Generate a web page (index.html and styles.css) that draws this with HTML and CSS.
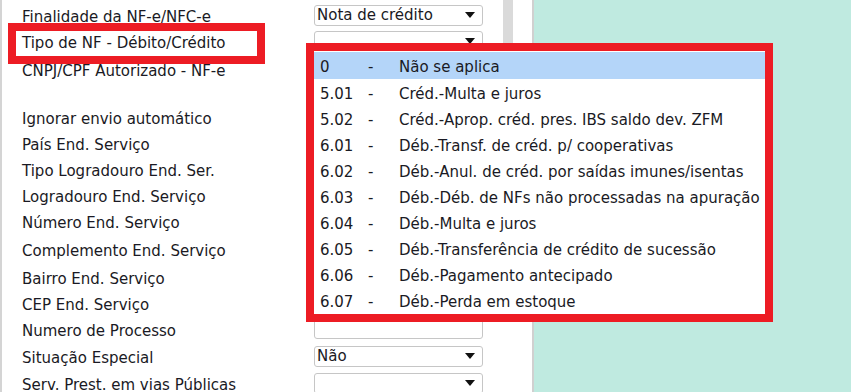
FILE: index.html
```html
<!DOCTYPE html>
<html lang="pt-BR">

<head>
    <meta charset="UTF-8">
    <meta name="viewport" content="width=device-width, initial-scale=1.0">
    <title>NF-e - Tipo de NF</title>
    <link rel="stylesheet" href="styles.css">
</head>

<body>

    <div class="screen">
        <div class="form-panel">
            <div class="form-rows">
                <div class="row">
                    <span class="label">Finalidade da NF-e/NFC-e</span>
                    <div class="field select"><span>Nota de crédito</span><i class="arrow"></i></div>
                </div>
                <div class="row">
                    <span class="label">Tipo de NF - Débito/Crédito</span>
                    <div class="field select"><span></span><i class="arrow"></i></div>
                </div>
                <div class="row row-top h50">
                    <span class="label">CNPJ/CPF Autorizado - NF-e</span>
                    <div class="field"></div>
                </div>
                <div class="row">
                    <span class="label">Ignorar envio automático</span>
                    <div class="check"></div>
                </div>
                <div class="row">
                    <span class="label">País End. Serviço</span>
                    <div class="field select"><span></span><i class="arrow"></i></div>
                </div>
                <div class="row">
                    <span class="label">Tipo Logradouro End. Ser.</span>
                    <div class="field select"><span></span><i class="arrow"></i></div>
                </div>
                <div class="row">
                    <span class="label">Logradouro End. Serviço</span>
                    <div class="field"></div>
                </div>
                <div class="row">
                    <span class="label">Número End. Serviço</span>
                    <div class="field"></div>
                </div>
                <div class="row h30">
                    <span class="label">Complemento End. Serviço</span>
                    <div class="field"></div>
                </div>
                <div class="row">
                    <span class="label">Bairro End. Serviço</span>
                    <div class="field"></div>
                </div>
                <div class="row h25">
                    <span class="label">CEP End. Serviço</span>
                    <div class="field"></div>
                </div>
                <div class="row h27">
                    <span class="label">Numero de Processo</span>
                    <div class="field"></div>
                </div>
                <div class="row h28">
                    <span class="label">Situação Especial</span>
                    <div class="field select"><span>Não</span><i class="arrow"></i></div>
                </div>
                <div class="row">
                    <span class="label">Serv. Prest. em vias Públicas</span>
                    <div class="field select"><span></span><i class="arrow"></i></div>
                </div>
            </div>
            <div class="scrollbar">
                <div class="scroll-thumb"></div>
            </div>
        </div>
        <div class="side-panel"></div>

        <!-- marcações em vermelho -->
        <div class="mark mark-label"></div>

        <div class="dropdown-list">
            <div class="option selected"><span>0</span><span>-</span><span>Não se aplica</span></div>
            <div class="option"><span>5.01</span><span>-</span><span>Créd.-Multa e juros</span></div>
            <div class="option"><span>5.02</span><span>-</span><span>Créd.-Aprop. créd. pres. IBS saldo dev. ZFM</span></div>
            <div class="option"><span>6.01</span><span>-</span><span>Déb.-Transf. de créd. p/ cooperativas</span></div>
            <div class="option"><span>6.02</span><span>-</span><span>Déb.-Anul. de créd. por saídas imunes/isentas</span></div>
            <div class="option"><span>6.03</span><span>-</span><span>Déb.-Déb. de NFs não processadas na apuração</span></div>
            <div class="option"><span>6.04</span><span>-</span><span>Déb.-Multa e juros</span></div>
            <div class="option"><span>6.05</span><span>-</span><span>Déb.-Transferência de crédito de sucessão</span></div>
            <div class="option"><span>6.06</span><span>-</span><span>Déb.-Pagamento antecipado</span></div>
            <div class="option"><span>6.07</span><span>-</span><span>Déb.-Perda em estoque</span></div>
        </div>
    </div>

</body>

</html>
```

FILE: styles.css
```css
body {
    margin: 0;
    padding: 0;
    font-family: "DejaVu Sans", Verdana, sans-serif;
    font-size: 15px;
    color: #1a1a24;
    overflow: hidden;
}

.screen {
    position: relative;
    display: flex;
    width: 851px;
    height: 392px;
    overflow: hidden;
}

.form-panel {
    display: flex;
    width: 534px;
    box-sizing: border-box;
    background: #fff;
    border-left: 2px solid #d4d4d4;
    border-right: 2px solid #d0d0d0;
}

.form-rows {
    padding: 2px 0 0 20px;
}

.row {
    display: flex;
    align-items: center;
    height: 26px;
}

.row-top {
    align-items: flex-start;
}

.row-top .label {
    line-height: 26px;
}

.row-top .field {
    margin-top: 2px;
}

.h25 { height: 25px; }
.h27 { height: 27px; }
.h28 { height: 28px; }
.h30 { height: 30px; }
.h50 { height: 50px; }

.label {
    width: 292px;
    padding-top: 4px;
    white-space: nowrap;
}

.field {
    display: flex;
    align-items: center;
    width: 169px;
    height: 21px;
    box-sizing: border-box;
    padding: 0 7px 0 2px;
    border: 1px solid #c6c6c6;
    border-radius: 3px;
    background: #fff;
    white-space: nowrap;
}

.field span {
    flex: 1;
}

.arrow {
    width: 0;
    height: 0;
    border-left: 5px solid transparent;
    border-right: 5px solid transparent;
    border-top: 6px solid #111;
}

.check {
    width: 13px;
    height: 13px;
    border: 1px solid #c6c6c6;
}

.scrollbar {
    width: 10px;
    margin-left: 20px;
}

.scroll-thumb {
    height: 200px;
    background: #dadada;
}

.side-panel {
    flex: 1;
    background: #bfeae0;
}

.mark {
    position: absolute;
    border: 8px solid #ed1c24;
    box-sizing: border-box;
}

.mark-label {
    left: 8px;
    top: 23px;
    width: 257px;
    height: 41px;
}

.dropdown-list {
    position: absolute;
    left: 306px;
    top: 43px;
    width: 467px;
    height: 279px;
    box-sizing: border-box;
    border: 8px solid #ed1c24;
    background: #fff;
    padding-top: 1px;
}

.option {
    display: grid;
    grid-template-columns: 48px 31px 1fr;
    align-items: center;
    height: 26px;
    padding: 3px 0 0 6px;
    box-sizing: border-box;
    white-space: nowrap;
}

.option.selected {
    height: 27px;
    background: #b4d5f9;
}
```
